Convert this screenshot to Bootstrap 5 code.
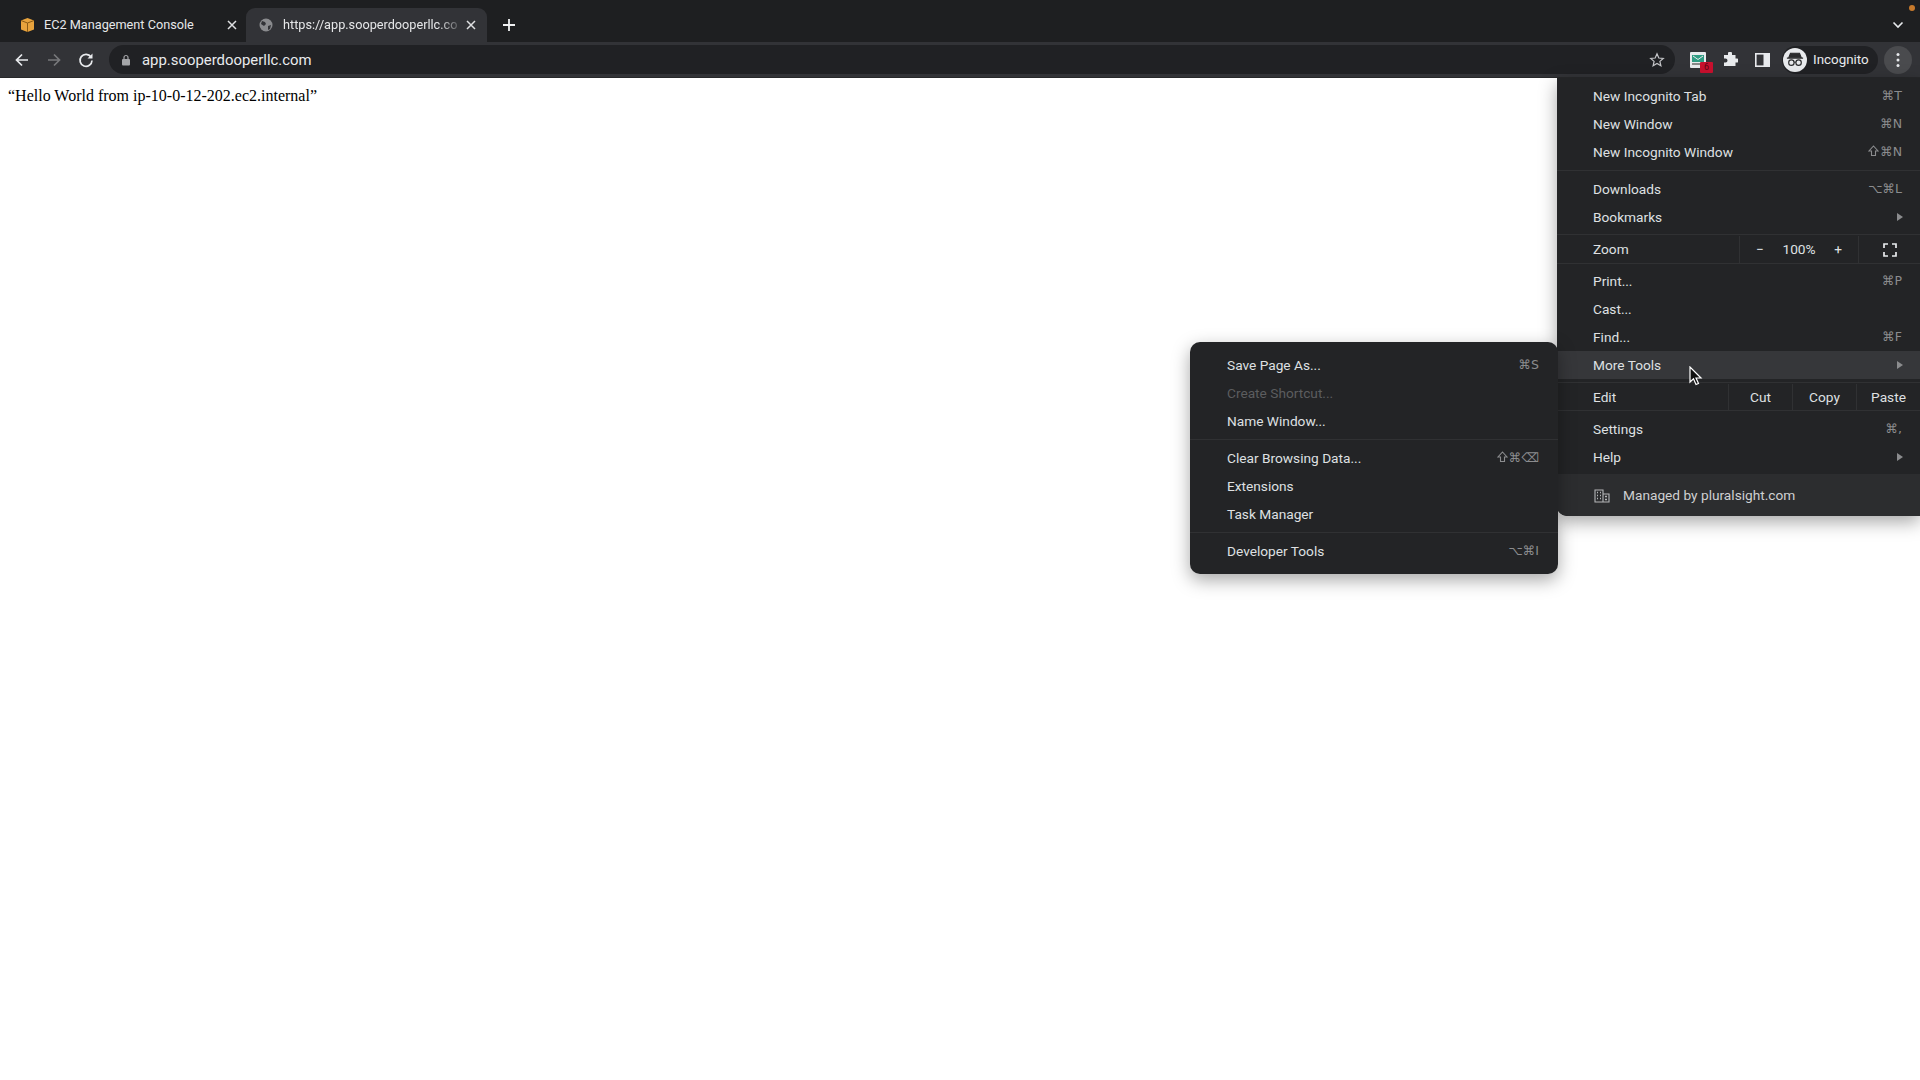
<!DOCTYPE html>
<html lang="en">
<head>
    <meta charset="UTF-8">
    <meta name="viewport" content="width=device-width, initial-scale=1.0">
    <title>app.sooperdooperllc.com</title>
    <link rel="stylesheet" href="https://cdn.jsdelivr.net/npm/bootstrap@5.3.0/dist/css/bootstrap.min.css">
    <style>
        html, body { height: 100%; }
        body {
            background: #fff;
            font-family: Roboto, "Liberation Sans", sans-serif;
            overflow: hidden;
            position: relative;
        }
        .tab-strip { height: 42px; background: #1e1f21; padding: 8px 8px 0 6px; color: #e6e7e9; font-size: 12.7px; }
        .chrome-tab { height: 34px; white-space: nowrap; border-radius: 9px 9px 0 0; flex-shrink: 0; }
        .tab-one { width: 240px; padding: 0 9px 0 14px; }
        .tab-one .tab-title { margin-left: 9px; }
        .tab-two { width: 241px; padding: 0 11px 0 13px; background: #323337; }
        .tab-title { flex: 1; margin-left: 10px; }
        .tab-fade { -webkit-mask-image: linear-gradient(to right, #000 85%, rgba(0,0,0,.12) 97%); mask-image: linear-gradient(to right, #000 85%, rgba(0,0,0,.12) 97%); }
        .new-tab { margin: 8px 0 0 13px; }
        .tool-bar { height: 36px; background: #323337; padding: 0 0 0 14px; border-bottom: 1px solid #27282a; }
        .nav-ico { width: 32px; height: 28px; flex-shrink: 0; }
        .nav-ico.last-nav { width: 31px; }
        .omni { width: 1566px; height: 29px; background: #202124; border-radius: 15px; color: #e8eaed; font-size: 14.9px; padding: 1px 0 0 12px; flex-shrink: 0; }
        .omni-url { margin-left: 11px; }
        .omni-star { margin-right: 10px; }
        .ext-first { margin-left: 7px; }
        .ext-ico { width: 32px; flex-shrink: 0; }
        .ext-badge { left: 18px; top: 10px; width: 13px; height: 11px; background: #c8102e; color: #5a0714; font-size: 9px; line-height: 11px; text-align: center; border-radius: 1px; }
        .incog-pill { height: 28px; width: 96px; background: #202124; border-radius: 14px; color: #e8eaed; font-size: 13.4px; margin-left: 4px; flex-shrink: 0; }
        .incog-face { width: 24px; height: 24px; background: #e8eaed; border-radius: 50%; margin-left: 1px; margin-right: 6px; }
        .incog-word { padding-top: 1px; }
        .kebab { width: 28px; height: 28px; border-radius: 50%; background: #4a4b4e; margin-left: 6px; flex-shrink: 0; }
        .page-text { font-family: "Liberation Serif", serif; font-size: 16px; color: #000; padding: 8px 8px; line-height: 20px; }
        .app-menu { position: absolute; background: #232426; color: #dfe0e2; font-size: 13.7px; box-shadow: 0 6px 18px rgba(0,0,0,.35); }
        .main-menu { left: 1557px; top: 78px; width: 363px; height: 438px; border-radius: 0 0 0 10px; padding-top: 4px; }
        .sub-menu { left: 1190px; top: 342px; width: 368px; height: 232px; border-radius: 10px; padding-top: 9px; z-index: 2; }
        .menu-row { height: 28px; padding: 1px 18px 0 36px; }
        .sub-menu .menu-row { padding-left: 37px; padding-right: 19px; }
        .menu-row.hot { background: #36373a; }
        .menu-row.off { color: #5c5d5f; }
        .key-hint { color: #8b8c8e; font-family: "DejaVu Sans", sans-serif; font-size: 12.5px; }
        .shift-key { margin-right: 1px; vertical-align: -1px; }
        .menu-sep { height: 1px; background: #303133; margin: 4px 0; }
        .arrow-r { width: 0; height: 0; border-left: 6px solid #8b8c8e; border-top: 4.5px solid transparent; border-bottom: 4.5px solid transparent; margin-right: -1px; margin-top: -1px; }
        .split-row { padding: 1px 0 0 36px; border-top: 1px solid #303133; border-bottom: 1px solid #303133; margin-top: 3px; }
        .zoom-row { height: 30px; }
        .edit-row { height: 29px; }
        .split-cell { height: 100%; border-left: 1px solid #303133; }
        .zoom-label { width: 146px; }
        .zoom-cell { width: 119px; padding: 0 16px; }
        .full-cell { width: 62px; }
        .edit-label { width: 135px; }
        .edit-cell { width: 64px; }
        .after-split { margin-top: 3px; }
        .managed { position: absolute; left: 0; right: 0; bottom: 0; height: 42px; background: #2c2d2f; padding: 1px 0 0 37px; border-radius: 0 0 0 10px; color: #cfd0d2; }
        .managed-text { margin-left: 13px; }
        .mouse-arrow { position: absolute; left: 1689px; top: 366px; z-index: 5; }
        .notify-dot { position: absolute; left: 1909px; top: 5px; width: 6px; height: 6px; background: #c77a2c; border-radius: 50%; }
    </style>
</head>
<body>

<!-- Tabs -->
<div class="tab-strip d-flex align-items-start">
    <div class="chrome-tab tab-one d-flex align-items-center">
        <svg width="15" height="16" viewBox="0 0 15 16"><path d="M7.5 1 14 3.500v9L7.500 15 1 12.500v-9z" fill="#e8a33d"/><path d="M1 3.500 7.500 6 14 3.500M7.500 6v9" stroke="#8a5a16" fill="none"/></svg>
        <span class="tab-title">EC2 Management Console</span>
        <svg width="10" height="10" viewBox="0 0 10 10"><path d="M1 1l8 8M9 1l-8 8" stroke="#dfe0e2" stroke-width="1.5"/></svg>
    </div>
    <div class="chrome-tab tab-two d-flex align-items-center">
        <svg width="14" height="14" viewBox="0 0 14 14"><circle cx="7" cy="7" r="6.500" fill="#8a8b8e"/><path d="M3 3l3 1 1 2-2 2-3-2zM9 8l3-1-1 4-2 1z" fill="#323337"/></svg>
        <span class="tab-title tab-fade">https://app.sooperdooperllc.co</span>
        <svg width="10" height="10" viewBox="0 0 10 10"><path d="M1 1l8 8M9 1l-8 8" stroke="#dfe0e2" stroke-width="1.5"/></svg>
    </div>
    <svg class="new-tab" width="18" height="18" viewBox="0 0 18 18"><path d="M9 3v12M3 9h12" stroke="#f0f1f2" stroke-width="1.8"/></svg>
    <svg class="ms-auto mt-2 me-2" width="12" height="18" viewBox="0 0 12 18"><path d="M1.500 6.500 6 11l4.500-4.500" stroke="#e8eaed" stroke-width="1.6" fill="none"/></svg>
</div>
<div class="notify-dot"></div>

<!-- Toolbar -->
<div class="tool-bar d-flex align-items-center">
    <div class="nav-ico d-flex align-items-center">
        <svg width="16" height="16" viewBox="0 0 16 16"><path d="M14 8H2.500M8 2.500 2.500 8 8 13.500" stroke="#e8eaed" stroke-width="1.7" fill="none"/></svg>
    </div>
    <div class="nav-ico d-flex align-items-center">
        <svg width="16" height="16" viewBox="0 0 16 16"><path d="M2 8h11.500M8 2.500 13.500 8 8 13.500" stroke="#77787b" stroke-width="1.7" fill="none"/></svg>
    </div>
    <div class="nav-ico last-nav d-flex align-items-center">
        <svg width="16" height="16" viewBox="0 0 16 16"><path d="M13 5a6 6 0 1 0 1 3.500" stroke="#e8eaed" stroke-width="1.7" fill="none"/><path d="M14.500 1.500v5h-5z" fill="#e8eaed"/></svg>
    </div>
    <div class="omni d-flex align-items-center">
        <svg width="10" height="12" viewBox="0 0 10 12"><rect x="1" y="5" width="8" height="6.500" rx="1" fill="#a4a5a8"/><path d="M3 5V3.500a2 2 0 0 1 4 0V5" stroke="#a4a5a8" fill="none" stroke-width="1.2"/></svg>
        <span class="omni-url">app.sooperdooperllc.com</span>
        <svg class="ms-auto omni-star" width="16" height="16" viewBox="0 0 16 16"><path d="M8 1.800 9.800 6l4.500.4-3.400 3 1 4.400L8 11.500l-3.900 2.300 1-4.400-3.400-3L6.200 6z" stroke="#c4c5c8" stroke-width="1.200" fill="none"/></svg>
    </div>
    <div class="ext-ico ext-first position-relative d-flex justify-content-center">
        <svg width="16" height="16" viewBox="0 0 16 16"><rect width="16" height="16" rx="1" fill="#e8eaed"/><rect x="2" y="3" width="12" height="7" fill="#2f9c83"/><path d="M3 4l5 3.500L13 4" stroke="#e8eaed" fill="none"/><rect x="2" y="11" width="8" height="2" fill="#888"/></svg>
        <span class="ext-badge position-absolute">6</span>
    </div>
    <div class="ext-ico d-flex justify-content-center">
        <svg width="16" height="16" viewBox="0 0 16 16"><path d="M6 1.500a2 2 0 0 1 4 0V3h3.500v3.500H15a2 2 0 0 1 0 4h-1.500V14H2v-3.500h1.500a2 2 0 0 0 0-4H2V3h4z" fill="#e8eaed"/></svg>
    </div>
    <div class="ext-ico d-flex justify-content-center">
        <svg width="15" height="14" viewBox="0 0 15 14"><rect x=".8" y=".8" width="13.400" height="12.400" fill="none" stroke="#e8eaed" stroke-width="1.600"/><rect x="8.500" y="1" width="5.500" height="12" fill="#e8eaed"/></svg>
    </div>
    <div class="incog-pill d-flex align-items-center">
        <span class="incog-face d-flex align-items-center justify-content-center">
            <svg width="18" height="15" viewBox="0 0 20 16"><path d="M5 1h10l2 5H3zM1 6.500h18" stroke="#2a2b2d" stroke-width="1.200" fill="#2a2b2d"/><circle cx="6" cy="11.500" r="3" fill="none" stroke="#2a2b2d" stroke-width="1.300"/><circle cx="14" cy="11.500" r="3" fill="none" stroke="#2a2b2d" stroke-width="1.300"/><path d="M9 11h2" stroke="#2a2b2d"/></svg>
        </span>
        <span class="incog-word">Incognito</span>
    </div>
    <div class="kebab d-flex align-items-center justify-content-center">
        <svg width="4" height="16" viewBox="0 0 4 16"><circle cx="2" cy="2.500" r="1.500" fill="#e8eaed"/><circle cx="2" cy="8" r="1.500" fill="#e8eaed"/><circle cx="2" cy="13.500" r="1.500" fill="#e8eaed"/></svg>
    </div>
</div>

<!-- Page -->
<div class="page-text">“Hello World from ip-10-0-12-202.ec2.internal”</div>

<!-- Chrome menu -->
<div class="app-menu main-menu">
    <div class="menu-row d-flex align-items-center justify-content-between"><span>New Incognito Tab</span><span class="key-hint">⌘T</span></div>
    <div class="menu-row d-flex align-items-center justify-content-between"><span>New Window</span><span class="key-hint">⌘N</span></div>
    <div class="menu-row d-flex align-items-center justify-content-between"><span>New Incognito Window</span><span class="key-hint"><svg class="shift-key" width="11" height="12" viewBox="0 0 11 12"><path d="M5.500 1 10 6H7.500v4.500h-4V6H1z" fill="none" stroke="#8b8c8e" stroke-width="1.100"/></svg>⌘N</span></div>
    <div class="menu-sep"></div>
    <div class="menu-row d-flex align-items-center justify-content-between"><span>Downloads</span><span class="key-hint">⌥⌘L</span></div>
    <div class="menu-row d-flex align-items-center justify-content-between"><span>Bookmarks</span><span class="arrow-r"></span></div>
    <div class="split-row zoom-row d-flex align-items-center">
        <span class="zoom-label">Zoom</span>
        <div class="split-cell zoom-cell d-flex align-items-center justify-content-between"><span>−</span><span>100%</span><span>+</span></div>
        <div class="split-cell full-cell d-flex align-items-center justify-content-center">
            <svg width="14" height="14" viewBox="0 0 14 14"><path d="M1 5V1h4M9 1h4v4M13 9v4H9M5 13H1V9" stroke="#e8eaed" stroke-width="1.700" fill="none"/></svg>
        </div>
    </div>
    <div class="menu-row after-split d-flex align-items-center justify-content-between"><span>Print...</span><span class="key-hint">⌘P</span></div>
    <div class="menu-row d-flex align-items-center"><span>Cast...</span></div>
    <div class="menu-row d-flex align-items-center justify-content-between"><span>Find...</span><span class="key-hint">⌘F</span></div>
    <div class="menu-row hot d-flex align-items-center justify-content-between"><span>More Tools</span><span class="arrow-r"></span></div>
    <div class="split-row edit-row d-flex align-items-center">
        <span class="edit-label">Edit</span>
        <div class="split-cell edit-cell d-flex align-items-center justify-content-center">Cut</div>
        <div class="split-cell edit-cell d-flex align-items-center justify-content-center">Copy</div>
        <div class="split-cell edit-cell d-flex align-items-center justify-content-center">Paste</div>
    </div>
    <div class="menu-row mt-1 d-flex align-items-center justify-content-between"><span>Settings</span><span class="key-hint">⌘,</span></div>
    <div class="menu-row d-flex align-items-center justify-content-between"><span>Help</span><span class="arrow-r"></span></div>
    <div class="managed d-flex align-items-center">
        <svg width="16" height="14" viewBox="0 0 16 14"><path d="M1 1h8v12H1zM9 5h6v8H9z" fill="none" stroke="#b5b6b8" stroke-width="1.100"/><path d="M3 3.500h1M6 3.500h1M3 6.500h1M6 6.500h1M3 9.500h1M6 9.500h1M11 7.500h2M11 10.500h2" stroke="#b5b6b8" stroke-width="1.500"/></svg>
        <span class="managed-text">Managed by pluralsight.com</span>
    </div>
</div>

<!-- More Tools submenu -->
<div class="app-menu sub-menu">
    <div class="menu-row d-flex align-items-center justify-content-between"><span>Save Page As...</span><span class="key-hint">⌘S</span></div>
    <div class="menu-row off d-flex align-items-center"><span>Create Shortcut...</span></div>
    <div class="menu-row d-flex align-items-center"><span>Name Window...</span></div>
    <div class="menu-sep"></div>
    <div class="menu-row d-flex align-items-center justify-content-between"><span>Clear Browsing Data...</span><span class="key-hint"><svg class="shift-key" width="11" height="12" viewBox="0 0 11 12"><path d="M5.500 1 10 6H7.500v4.500h-4V6H1z" fill="none" stroke="#8b8c8e" stroke-width="1.100"/></svg>⌘⌫</span></div>
    <div class="menu-row d-flex align-items-center"><span>Extensions</span></div>
    <div class="menu-row d-flex align-items-center"><span>Task Manager</span></div>
    <div class="menu-sep"></div>
    <div class="menu-row d-flex align-items-center justify-content-between"><span>Developer Tools</span><span class="key-hint">⌥⌘I</span></div>
</div>

<!-- Mouse pointer -->
<svg class="mouse-arrow" width="14" height="20" viewBox="0 0 14 20"><path d="M1 1v15l3.500-3.300 2.500 5.800 2.500-1-2.500-5.500H12z" fill="#111" stroke="#fff" stroke-width="1.200"/></svg>

<script src="https://cdn.jsdelivr.net/npm/bootstrap@5.3.0/dist/js/bootstrap.bundle.min.js"></script>
</body>
</html>
